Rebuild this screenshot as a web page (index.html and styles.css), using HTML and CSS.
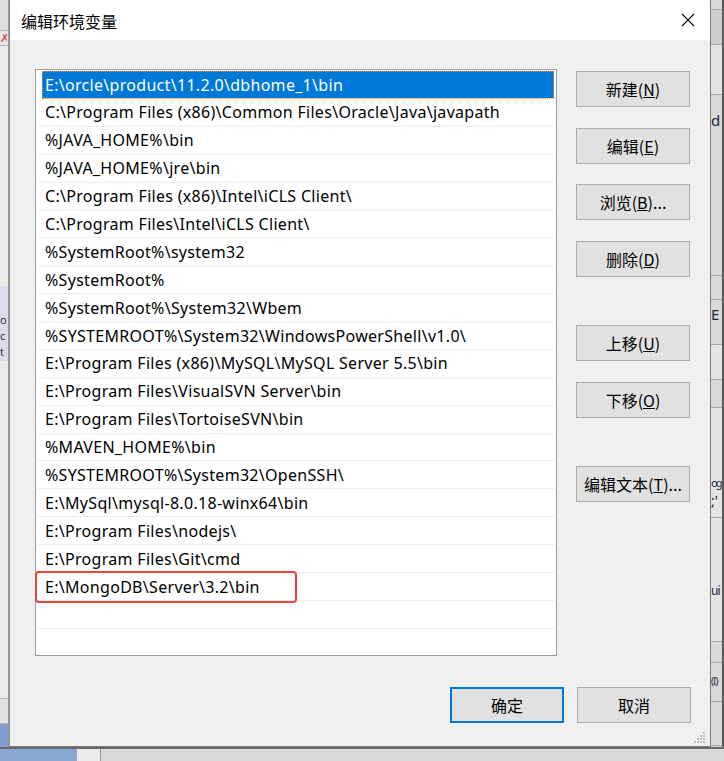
FILE: index.html
```html
<!DOCTYPE html>
<html lang="zh-CN">
<head>
  <meta charset="UTF-8">
  <meta name="viewport" content="width=device-width, initial-scale=1.0">
  <title>编辑环境变量</title>
  <link rel="stylesheet" href="styles.css">
</head>
<body>
  <div class="desk-left">
    <div class="dl-top"></div>
    <div class="dl-mark">✗</div>
    <div class="dl-plain"></div>
    <div class="dl-lav"><span>o</span><span>c</span><span>t</span></div>
    <div class="dl-plain dl-long"></div>
    <div class="dl-line"></div>
    <div class="dl-blue"></div>
  </div>

  <div class="dialog">
    <div class="titlebar">
      <span class="title">编辑环境变量</span>
      <svg class="close" width="14" height="14" viewBox="0 0 14 14">
        <line x1="1" y1="1" x2="13" y2="13" stroke="#111" stroke-width="1.1"/>
        <line x1="13" y1="1" x2="1" y2="13" stroke="#111" stroke-width="1.1"/>
      </svg>
    </div>

    <div class="content">
      <div class="list">
        <div class="row selected">E:\orcle\product\11.2.0\dbhome_1\bin</div>
        <div class="row">C:\Program Files (x86)\Common Files\Oracle\Java\javapath</div>
        <div class="row">%JAVA_HOME%\bin</div>
        <div class="row">%JAVA_HOME%\jre\bin</div>
        <div class="row">C:\Program Files (x86)\Intel\iCLS Client\</div>
        <div class="row">C:\Program Files\Intel\iCLS Client\</div>
        <div class="row">%SystemRoot%\system32</div>
        <div class="row">%SystemRoot%</div>
        <div class="row">%SystemRoot%\System32\Wbem</div>
        <div class="row">%SYSTEMROOT%\System32\WindowsPowerShell\v1.0\</div>
        <div class="row">E:\Program Files (x86)\MySQL\MySQL Server 5.5\bin</div>
        <div class="row">E:\Program Files\VisualSVN Server\bin</div>
        <div class="row">E:\Program Files\TortoiseSVN\bin</div>
        <div class="row">%MAVEN_HOME%\bin</div>
        <div class="row">%SYSTEMROOT%\System32\OpenSSH\</div>
        <div class="row">E:\MySql\mysql-8.0.18-winx64\bin</div>
        <div class="row">E:\Program Files\nodejs\</div>
        <div class="row">E:\Program Files\Git\cmd</div>
        <div class="row marked">E:\MongoDB\Server\3.2\bin</div>
        <div class="row"></div>
      </div>

      <div class="side">
        <button class="btn">新建(<u>N</u>)</button>
        <button class="btn">编辑(<u>E</u>)</button>
        <button class="btn">浏览(<u>B</u>)...</button>
        <button class="btn">删除(<u>D</u>)</button>
        <button class="btn group">上移(<u>U</u>)</button>
        <button class="btn">下移(<u>O</u>)</button>
        <button class="btn group">编辑文本(<u>T</u>)...</button>
      </div>
    </div>

    <div class="footer">
      <button class="btn default">确定</button>
      <button class="btn">取消</button>
    </div>

    <svg class="grip" width="12" height="12" viewBox="0 0 12 12">
      <rect x="9" y="1" width="2" height="2" fill="#bdbdbd"/>
      <rect x="6" y="4" width="2" height="2" fill="#bdbdbd"/>
      <rect x="9" y="4" width="2" height="2" fill="#bdbdbd"/>
      <rect x="3" y="7" width="2" height="2" fill="#bdbdbd"/>
      <rect x="6" y="7" width="2" height="2" fill="#bdbdbd"/>
      <rect x="9" y="7" width="2" height="2" fill="#bdbdbd"/>
      <rect x="0" y="10" width="2" height="2" fill="#bdbdbd"/>
      <rect x="3" y="10" width="2" height="2" fill="#bdbdbd"/>
      <rect x="6" y="10" width="2" height="2" fill="#bdbdbd"/>
      <rect x="9" y="10" width="2" height="2" fill="#bdbdbd"/>
    </svg>
  </div>

  <div class="desk-right">
    <div class="seg s1"></div>
    <div class="seg s2 dark"></div>
    <div class="seg s3 light"></div>
    <div class="seg s4"><span class="frag f-d">d</span></div>
    <div class="seg s5"></div>
    <div class="seg s6"><span class="frag f-e">E</span></div>
    <div class="seg s7 light"></div>
    <div class="seg s8"></div>
    <div class="seg s9 light"><span class="frag f-og">og</span><span class="frag">;'</span></div>
    <div class="seg s10 light"><span class="frag f-ui">ui</span></div>
    <div class="seg s11"></div>
    <div class="seg s12"><span class="frag f-i">(I)</span></div>
    <div class="seg s13"></div>
  </div>

  <div class="desk-bottom">
    <div class="db-blue"></div>
    <div class="db-white"></div>
    <div class="db-gray"></div>
  </div>
</body>
</html>
```

FILE: styles.css
```css
body {
  margin: 0;
  width: 724px;
  height: 761px;
  overflow: hidden;
  background: #d6d6d6;
  font-family: "Noto Sans", "Noto Sans CJK SC", sans-serif;
  display: grid;
  grid-template-columns: 9px 702px 13px;
  grid-template-rows: 747px 14px;
}

/* background desktop pieces */
.desk-left {
  display: flex;
  flex-direction: column;
  background: #e6e6e6;
  border-right: 1px solid #9a9a9a;
  overflow: hidden;
  font-size: 11px;
  color: #333;
}
.dl-top {
  height: 30px;
  background: #dedede;
  border-bottom: 1px solid #b5b5b5;
}
.dl-mark {
  height: 14px;
  color: #d84a3a;
  line-height: 14px;
  border-bottom: 1px solid #b5b5b5;
}
.dl-plain {
  height: 240px;
  background: #ebebeb;
}
.dl-long {
  height: 337px;
}
.dl-lav {
  height: 75px;
  background: #dcdcee;
  display: flex;
  flex-direction: column;
  padding-top: 26px;
  box-sizing: border-box;
  line-height: 16px;
}
.dl-line {
  height: 24px;
  border-top: 1px solid #b8b8b8;
  border-bottom: 1px solid #b8b8b8;
  background: #e2e2e2;
}
.dl-blue {
  flex: 1;
  background: #7f9dcc;
}

.desk-right {
  display: flex;
  flex-direction: column;
  background: #d9d9d9;
  border-right: 2px solid #5a5a5a;
  overflow: hidden;
  font-size: 11px;
  color: #1b2740;
}
.seg {
  flex-shrink: 0;
  box-sizing: border-box;
  border-bottom: 1px solid #a8a8a8;
  display: flex;
  flex-direction: column;
  line-height: 18px;
}
.dark { background: #cdcdcd; }
.light { background: #e4e4e4; }
.s1 { height: 10px; }
.s2 { height: 35px; }
.s3 { height: 50px; }
.s4 { height: 181px; }
.s5 { height: 24px; }
.s6 { height: 45px; }
.s7 { height: 35px; }
.s8 { height: 28px; }
.s9 { height: 110px; }
.s10 { height: 124px; }
.s11 { height: 21px; }
.s12 { height: 39px; }
.s13 { height: 44px; }
.frag { font-size: 14px; }
.f-d { margin-top: 16px; font-size: 15px; }
.f-e { margin-top: 5px; font-size: 15px; }
.f-og { margin-top: 66px; font-size: 11px; letter-spacing: -2px; }
.f-ui { margin-top: 64px; font-size: 12px; letter-spacing: -1px; }
.f-i { margin-top: 9px; font-size: 10px; letter-spacing: -1px; }

.desk-bottom {
  grid-column: 1 / 4;
  display: flex;
  border-top: 2px solid #6a6a6a;
}
.db-blue {
  width: 77px;
  background: #8aa7d2;
}
.db-white {
  width: 23px;
  background: #ececec;
  border-right: 1px solid #9a9a9a;
}
.db-gray {
  flex: 1;
  background: #dadada;
}

/* dialog window */
.dialog {
  position: relative;
  display: flex;
  flex-direction: column;
  background: #f0f0f0;
  border-left: 1px solid #8a8a8a;
  border-right: 1px solid #7a7a7a;
  border-bottom: 1px solid #7a7a7a;
  box-sizing: border-box;
}
.titlebar {
  height: 40px;
  flex-shrink: 0;
  background: #fff;
  display: flex;
  align-items: center;
  justify-content: space-between;
  padding: 0 15px 0 11px;
}
.title {
  font-family: "Noto Sans CJK SC", sans-serif;
  font-size: 16px;
  color: #000;
  margin-top: 1px;
}

.content {
  display: flex;
  gap: 19px;
  padding: 29px 0 0 25px;
}
.list {
  width: 522px;
  height: 587px;
  box-sizing: border-box;
  border: 1px solid #9c9c9c;
  background: #fff;
  padding: 1px 2px 0 2px;
}
.row {
  position: relative;
  height: 27.9px;
  box-sizing: border-box;
  border-bottom: 1px solid #ececec;
  padding: 1.5px 0 0 7px;
  font-size: 16px;
  line-height: 25px;
  letter-spacing: 0.3px;
  color: #000;
  white-space: nowrap;
}
.row.selected {
  margin-left: 4px;
  padding-left: 3px;
  background: #0078d7;
  color: #fff;
  outline: 1px dotted #ff8728;
  outline-offset: -1px;
}
.row.marked::after {
  content: "";
  position: absolute;
  left: -3px;
  top: -2px;
  width: 262px;
  height: 32px;
  box-sizing: border-box;
  border: 2px solid #e8453c;
  border-radius: 4px;
}

.side {
  display: flex;
  flex-direction: column;
  gap: 20.5px;
  padding-top: 2px;
}
.btn {
  width: 114px;
  height: 36px;
  background: #e1e1e1;
  border: 1px solid #adadad;
  font-family: "Noto Sans CJK SC", sans-serif;
  font-size: 16px;
  color: #000;
  padding: 0;
}
.btn.group {
  margin-top: 28px;
}
.btn.default {
  border: 2px solid #0078d7;
}

.footer {
  display: flex;
  justify-content: flex-end;
  gap: 13px;
  padding: 31px 19px 0 0;
}

.grip {
  position: absolute;
  right: 4px;
  bottom: 3px;
}
```
